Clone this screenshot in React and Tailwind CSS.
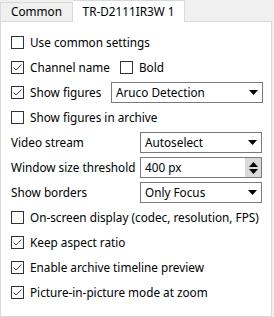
import React from 'react';

const Check = ({ checked }) => (
    <span className="w-[13px] h-[13px] border border-[#333333] bg-white flex items-center justify-center shrink-0">
        {checked && (
            <svg width="11" height="11" viewBox="0 0 11 11" fill="none">
                <path d="M1.5 5.5 L4 8 L9.5 2.5" stroke="#444444" strokeWidth="1" />
            </svg>
        )}
    </span>
);

const CheckRow = ({ checked, label, children }) => (
    <div className="h-[25px] flex items-center">
        <Check checked={checked} />
        <span className="ml-[6px]">{label}</span>
        {children}
    </div>
);

const Arrow = () => (
    <svg width="9" height="5" viewBox="0 0 9 5"><path d="M0 0 H9 L4.5 5 Z" fill="#000" /></svg>
);

const Select = ({ value, width }) => (
    <div className={`${width} h-[21px] border border-[#7a7a7a] bg-white flex items-center pl-[4px] pr-[4px]`}>
        <span className="flex-1">{value}</span>
        <Arrow />
    </div>
);

const FieldRow = ({ label, children }) => (
    <div className="h-[25px] flex items-center">
        <span className="w-[129px]">{label}</span>
        {children}
    </div>
);

const App = () => {
    return (
        <div className="w-[274px] h-[317px] bg-[#f0f0f0] font-['Noto_Sans',sans-serif] text-[11.75px] text-black leading-none overflow-hidden">
            <div className="flex items-end h-[21px]">
                <div className="w-[73px] h-[19px] border border-b-0 border-[#d9d9d9] bg-[#f0f0f0] flex items-center justify-center">Common</div>
                <div className="relative z-10 -mb-px w-[112px] h-[22px] border border-b-0 border-l-0 border-[#d9d9d9] bg-white flex items-center justify-center">TR-D2111IR3W 1</div>
            </div>
            <div className="w-[272px] h-[296px] bg-white border border-[#d9d9d9] pl-[10px] pt-[8px]">
                <CheckRow label="Use common settings" />
                <CheckRow checked label="Channel name">
                    <span className="ml-[10px] flex items-center">
                        <Check />
                        <span className="ml-[6px]">Bold</span>
                    </span>
                </CheckRow>
                <div className="h-[25px] flex items-center">
                    <Check checked />
                    <span className="ml-[6px] w-[81px]">Show figures</span>
                    <Select value="Aruco Detection" width="w-[152px]" />
                </div>
                <CheckRow label="Show figures in archive" />
                <FieldRow label="Video stream">
                    <Select value="Autoselect" width="w-[122px]" />
                </FieldRow>
                <FieldRow label="Window size threshold">
                    <div className="w-[122px] h-[21px] border border-[#7a7a7a] bg-white flex items-stretch">
                        <span className="flex-1 pl-[4px] flex items-center">400 px</span>
                        <div className="w-[16px] bg-[#dadada] flex flex-col items-center justify-center gap-[2px]">
                            <svg width="9" height="5" viewBox="0 0 9 5"><path d="M0 5 H9 L4.5 0 Z" fill="#000" /></svg>
                            <svg width="9" height="5" viewBox="0 0 9 5"><path d="M0 0 H9 L4.5 5 Z" fill="#000" /></svg>
                        </div>
                    </div>
                </FieldRow>
                <FieldRow label="Show borders">
                    <Select value="Only Focus" width="w-[122px]" />
                </FieldRow>
                <CheckRow label="On-screen display (codec, resolution, FPS)" />
                <CheckRow checked label="Keep aspect ratio" />
                <CheckRow checked label="Enable archive timeline preview" />
                <CheckRow checked label="Picture-in-picture mode at zoom" />
            </div>
        </div>
    );
};

export default App;
